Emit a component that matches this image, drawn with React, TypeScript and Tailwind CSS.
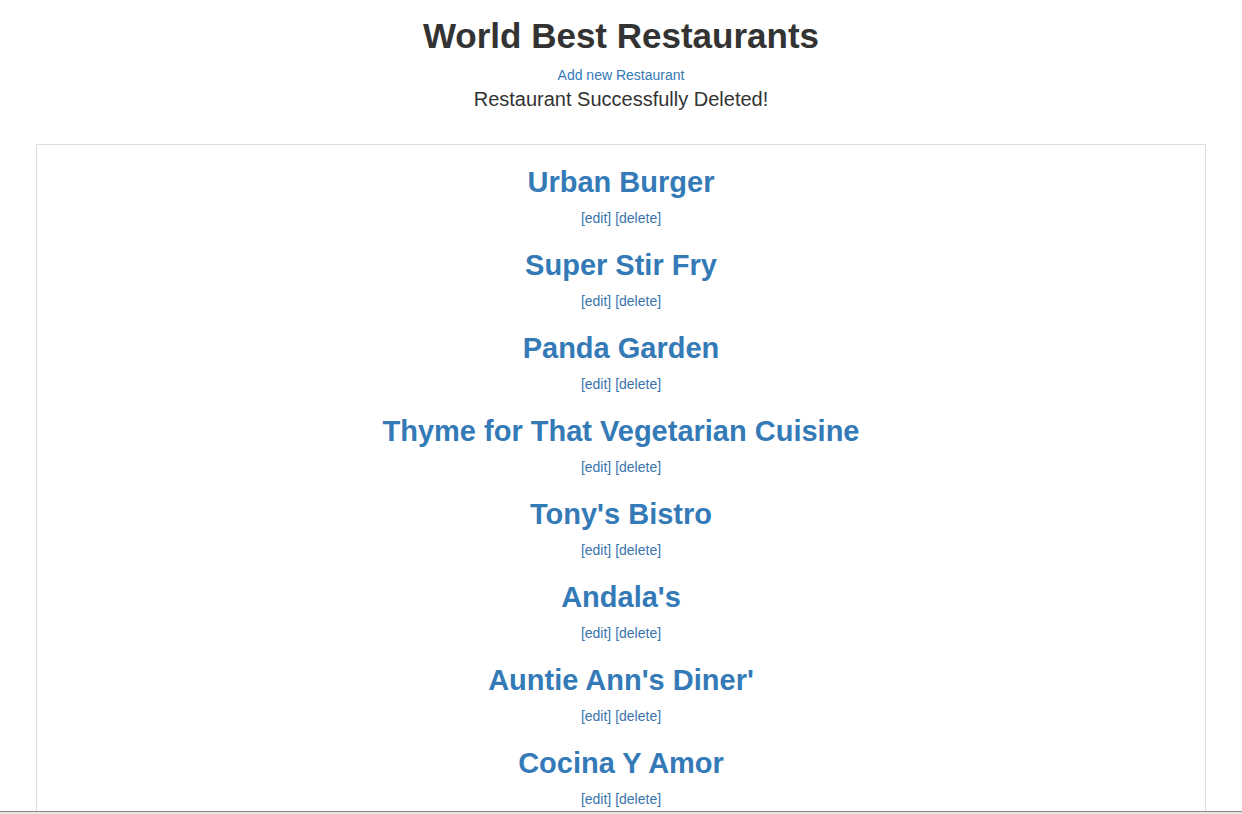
import React from "react";

const restaurants = [
  "Urban Burger",
  "Super Stir Fry",
  "Panda Garden",
  "Thyme for That Vegetarian Cuisine",
  "Tony's Bistro",
  "Andala's",
  "Auntie Ann's Diner'",
  "Cocina Y Amor",
];

const RestaurantItem = ({ name }: { name: string }) => (
  <li className="mb-[21px]">
    <h2 className="text-[29px] leading-[33px] font-bold text-[#337ab7]">
      <a href="#">{name}</a>
    </h2>
    <div className="mt-[9px] text-[14px] leading-[20px] text-[#3a74ad]">
      <a href="#">[edit]</a> <a href="#">[delete]</a>
    </div>
  </li>
);

const App = () => {
  return (
    <div className="h-[814px] overflow-hidden flex flex-col bg-white text-[#333] font-['Liberation_Sans',Arial,sans-serif]">
      <main className="flex-1 overflow-hidden">
        <header className="text-center">
          <h1 className="mt-[16px] text-[35px] leading-[40px] font-bold">World Best Restaurants</h1>
          <a href="#" className="block mt-[9px] text-[14px] leading-[20px] text-[#337ab7]">
            Add new Restaurant
          </a>
          <p className="text-[20px] leading-[28px]">Restaurant Successfully Deleted!</p>
        </header>
        <div className="mx-auto mt-[31px] w-[1170px] border border-[#ddd] pt-[21px] text-center">
          <ul>
            {restaurants.map((r) => (
              <RestaurantItem key={r} name={r} />
            ))}
          </ul>
        </div>
      </main>
      <div className="h-[3px] border-t border-[#8a8a8a] bg-[#e6e6e6]" />
    </div>
  );
};

export default App;
